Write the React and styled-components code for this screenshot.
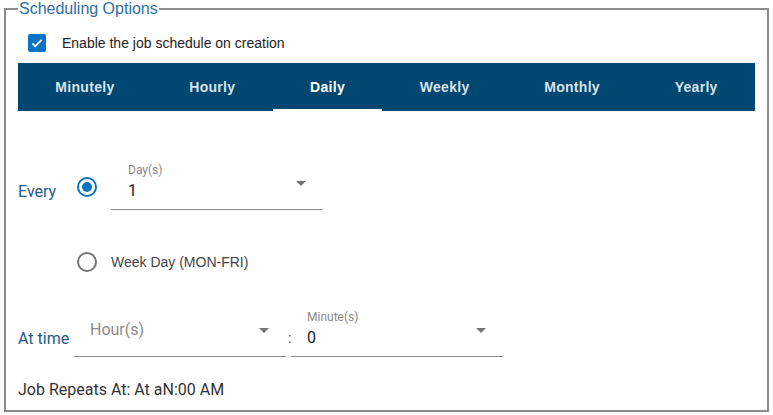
import React, { useState } from "react";
import styled, { createGlobalStyle } from "styled-components";

const GlobalStyle = createGlobalStyle`
    html, body {
        margin: 0;
        padding: 0;
        background: #fff;
    }
    * {
        box-sizing: border-box;
    }
`;

const Frame = styled.fieldset`
    margin: 0 4px;
    padding: 0 12px;
    height: 412px;
    border: 2px solid #8c8c8c;
    font-family: "Roboto", "Liberation Sans", sans-serif;
`;

const Legend = styled.legend`
    padding: 0 1px;
    font-family: "Liberation Sans", Arial, sans-serif;
    font-size: 16px;
    line-height: 18px;
    color: #2f6da3;
`;

const CheckRow = styled.label`
    display: flex;
    align-items: center;
    gap: 16px;
    margin: 16px 0 0 10px;
    height: 18px;
    font-family: "Liberation Sans", Arial, sans-serif;
    font-size: 14px;
    color: #222;
`;

const CheckBox = styled.span`
    width: 18px;
    height: 18px;
    border-radius: 2px;
    background: #0b74c4;
    display: flex;
    align-items: center;
    justify-content: center;
`;

const TabBar = styled.div`
    display: flex;
    margin-top: 11px;
    height: 48px;
    background: #004872;
`;

const Tab = styled.button`
    flex: 1 1 auto;
    position: relative;
    padding: 0;
    border: none;
    background: none;
    cursor: pointer;
    font-family: "Liberation Sans", Arial, sans-serif;
    font-weight: bold;
    font-size: 14px;
    letter-spacing: 0.3px;
    color: ${(p) => (p.$active ? "#ffffff" : "rgba(255,255,255,0.86)")};

    &::after {
        content: "";
        display: ${(p) => (p.$active ? "block" : "none")};
        position: absolute;
        left: 0;
        right: 0;
        bottom: -1px;
        height: 3px;
        background: #fff;
    }
`;

const Row = styled.div`
    display: flex;
    align-items: center;
    margin-top: ${(p) => p.$top}px;
    padding-left: ${(p) => p.$indent || 0}px;
`;

const FieldLabel = styled.span`
    font-size: 16px;
    color: #245b8a;
    width: ${(p) => p.$width}px;
    margin-top: ${(p) => p.$shift || 0}px;
`;

const Radio = styled.span`
    width: 20px;
    height: 20px;
    border-radius: 50%;
    border: 2px solid ${(p) => (p.$checked ? "#0b74c4" : "#757575")};
    display: flex;
    align-items: center;
    justify-content: center;
    flex-shrink: 0;

    &::after {
        content: "";
        display: ${(p) => (p.$checked ? "block" : "none")};
        width: 10px;
        height: 10px;
        border-radius: 50%;
        background: #0b74c4;
    }
`;

const RadioText = styled.span`
    margin-left: 14px;
    font-family: "Liberation Sans", Arial, sans-serif;
    font-size: 14px;
    color: #444;
`;

const Select = styled.div`
    position: relative;
    width: 212px;
    height: 47px;
    padding-left: ${(p) => p.$pad || 17}px;
    border-bottom: 1px solid #8c8c8c;
    margin-left: ${(p) => p.$left || 0}px;
`;

const SmallLabel = styled.div`
    font-size: 12px;
    line-height: 14px;
    color: #8a8a8a;
`;

const Value = styled.div`
    margin-top: 4px;
    font-size: 16px;
    line-height: 20px;
    color: #222;
`;

const Placeholder = styled.div`
    margin-top: 10px;
    font-size: 16px;
    line-height: 20px;
    color: #8a8a8a;
`;

const Arrow = styled.span`
    position: absolute;
    right: 17px;
    top: ${(p) => p.$top}px;
    width: 0;
    height: 0;
    border-left: 5px solid transparent;
    border-right: 5px solid transparent;
    border-top: 5px solid #757575;
`;

const Colon = styled.span`
    width: 5px;
    margin-top: 8px;
    padding-left: 2px;
    font-size: 14px;
    color: #444;
`;

const Summary = styled.div`
    margin-top: 23px;
    font-size: 16px;
    line-height: 19px;
    color: #333;
`;

const tabs = ["Minutely", "Hourly", "Daily", "Weekly", "Monthly", "Yearly"];

export default function App() {
    const [active, setActive] = useState("Daily");

    return (
        <>
            <GlobalStyle />
            <Frame>
                <Legend>Scheduling Options</Legend>
                <CheckRow>
                    <CheckBox>
                        <svg width="14" height="14" viewBox="0 0 24 24">
                            <path d="M4 12.5l5 5L20 6.5" fill="none" stroke="#fff" strokeWidth="3" />
                        </svg>
                    </CheckBox>
                    Enable the job schedule on creation
                </CheckRow>
                <TabBar>
                    {tabs.map((t) => (
                        <Tab key={t} $active={t === active} onClick={() => setActive(t)}>
                            {t}
                        </Tab>
                    ))}
                </TabBar>

                <Row $top={52}>
                    <FieldLabel $width={59} $shift={10}>Every</FieldLabel>
                    <Radio $checked />
                    <Select $left={14}>
                        <SmallLabel>Day(s)</SmallLabel>
                        <Value>1</Value>
                        <Arrow $top={18} />
                    </Select>
                </Row>

                <Row $top={42} $indent={59}>
                    <Radio />
                    <RadioText>Week Day (MON-FRI)</RadioText>
                </Row>

                <Row $top={38}>
                    <FieldLabel $width={56} $shift={10}>At time</FieldLabel>
                    <Select $pad={16}>
                        <Placeholder>Hour(s)</Placeholder>
                        <Arrow $top={18} />
                    </Select>
                    <Colon>:</Colon>
                    <Select $pad={16}>
                        <SmallLabel>Minute(s)</SmallLabel>
                        <Value>0</Value>
                        <Arrow $top={18} />
                    </Select>
                </Row>

                <Summary>Job Repeats At: At aN:00 AM</Summary>
            </Frame>
        </>
    );
}
